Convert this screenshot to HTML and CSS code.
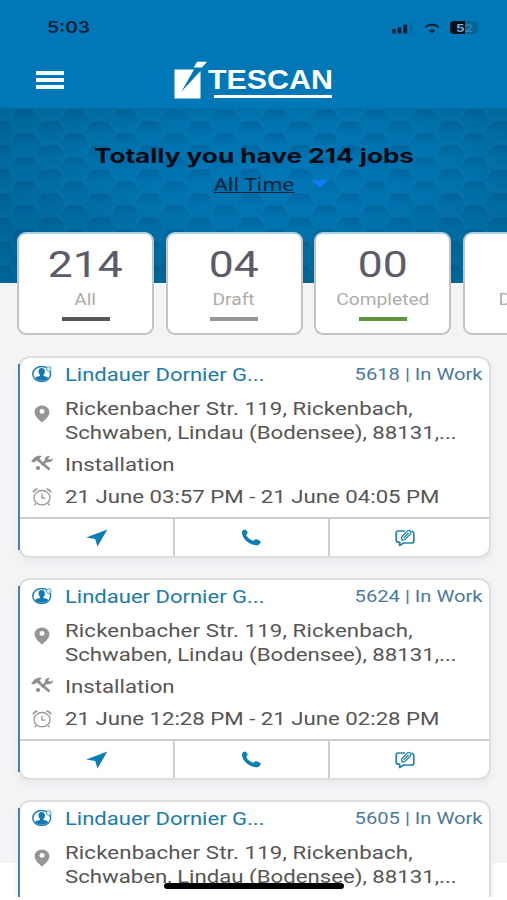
FILE: index.html
```html
<!DOCTYPE html>
<html lang="en">
  <head>
    <meta charset="UTF-8" />
    <meta name="viewport" content="width=device-width, initial-scale=1.0" />
    <title>Tescan jobs</title>
    <link rel="stylesheet" href="styles.css">
  </head>
  <body>
    <svg width="0" height="0" class="sprite">
      <symbol id="i-user" viewBox="0 0 20 18">
        <ellipse cx="9.700" cy="9" rx="8.900" ry="7.500" fill="#fff" stroke="#2580b5" stroke-width="1.500" />
        <ellipse cx="9.700" cy="6.600" rx="3.200" ry="3.500" fill="#1478b0" />
        <path d="M7.900 9h3.600v2c3 .5 4.400 1 4.700 2.200-3 3.300-10 3.300-13 0 .3-1.200 1.700-1.700 4.700-2.200z" fill="#1478b0" />
        <circle cx="16.800" cy="4" r="2.400" fill="#d5e8f2" stroke="#5b9fc6" stroke-width=".9" />
      </symbol>
      <symbol id="i-pin" viewBox="0 0 16 18">
        <path d="M8 .5C3.700.5.6 3.500.6 7.200.6 11.500 5 14.500 8 17.600c3-3.100 7.400-6.100 7.400-10.400C15.400 3.500 12.300.5 8 .5z" fill="#959595" />
        <ellipse cx="8" cy="6.400" rx="2.500" ry="2.400" fill="#fff" />
      </symbol>
      <symbol id="i-tools" viewBox="0 0 24 16">
        <path d="M1 6.500 4.500 2.500C7 .3 9.500.4 12 1L9.500 3.200 11 4.900 8.600 7 7 5.400 3.800 7.400z" fill="#8e8e8e" />
        <path d="M9 5.500 19.500 14.500" stroke="#8e8e8e" stroke-width="2.600" />
        <path d="M11.500 9.800 17.500 5" stroke="#8e8e8e" stroke-width="2.600" />
        <path d="M19.800 1c-4-.4-6 2.300-4.300 5.300 3 2.100 7.100.8 7.800-3l-3.300 1.500-2-1.300z" fill="#8e8e8e" />
        <circle cx="8" cy="13" r="2.100" fill="#8e8e8e" />
      </symbol>
      <symbol id="i-clock" viewBox="0 0 20 18">
        <g fill="none" stroke="#999" stroke-width="1.300">
          <ellipse cx="10" cy="9.700" rx="8" ry="7.200" />
          <path d="M10 5.500v4.700h3.500M4 15.500l-1.500 1.700M16 15.500l1.500 1.700" />
          <path d="M1 4.200C2 2.400 3.500 1.200 5.500.9M19 4.200C18 2.400 16.500 1.200 14.500.9" stroke-width="1.800" />
        </g>
      </symbol>
      <symbol id="i-nav" viewBox="0 0 24 20">
        <path d="M23.500.6 0 9.400 10 11 12.500 19.500z" fill="#0d7db3" />
      </symbol>
      <symbol id="i-phone" viewBox="0 0 22 18">
        <path d="M1 2.600C1.500 1.400 3 .5 4.300.5c1 .2 2.700 2.800 2.700 3.600 0 .9-1.700 1.600-1.500 2.500C6.600 9 9.500 11.300 12.500 12.400c1.100.2 2-1.500 3.200-1.500 1.100 0 4.800 1.600 5.100 2.500.1 1.300-1.600 3.500-3.300 3.900C9 17.600 0 10 1 2.600z" fill="#0d7db3" />
      </symbol>
      <symbol id="i-note" viewBox="0 0 20 18">
        <g fill="none" stroke="#2385ac" stroke-width="1.700" stroke-linejoin="round" stroke-linecap="round">
          <path d="M9.500 2H3.600Q1.200 2 1.200 4v7.200q0 2 2.400 2h1v3.300l4-2.500h8q2.200 0 2.200-2V5q0-2-1.500-2.700" />
          <path d="M7 10.700 6.500 8.300 12.500 1.900q1.600-1 2.900.2 1.200 1.200.2 2.600L9.700 10.600 7 11.200M9 8.600l4.200-4.300" stroke-width="1.300" />
        </g>
      </symbol>
    </svg>

    <header class="topbar">
      <div class="status">
        <span class="status-time"><span class="wide">5:03</span></span>
        <svg class="status-icons" width="90" height="16" viewBox="0 0 90 16">
          <g fill="#06213a">
            <rect x="1" y="9" width="3.800" height="4.500" rx="1" />
            <rect x="6.500" y="7.200" width="3.800" height="6.300" rx="1" />
            <rect x="12.200" y="4.500" width="4" height="9" rx="1" />
            <rect x="18" y="2" width="3.300" height="11.500" rx="1" opacity=".15" />
            <path d="M38 10.400 41 13.300l3-2.900q-3-1.900-6 0z" />
          </g>
          <path d="M34.300 7q6.700-4.800 13.400 0" fill="none" stroke="#06213a" stroke-width="2.200" />
          <rect x="59" y="1" width="28" height="13" rx="4" fill="#07649a" />
          <path d="M63 1h11v13H63q-4 0-4-4V5q0-4 4-4z" fill="#04101d" />
          <path d="M88.200 5.500q2 2 0 4z" fill="#07649a" />
          <text x="65" y="11.500" textLength="17" lengthAdjust="spacingAndGlyphs" class="battery-text">5<tspan fill="#2a85b5">2</tspan></text>
        </svg>
      </div>
      <div class="nav">
        <div class="menu"><i></i><i></i><i></i></div>
        <div class="logo">
          <svg width="34" height="38" viewBox="0 0 34 38">
            <path d="M.5 8.500H20L7.500 30.500 26.500 10V37.500H.5z" fill="#fff" />
            <path d="M23 .7H33L28 6.500H19.800z" fill="#fff" />
          </svg>
          <div class="logo-name"><span class="wide">TESCAN</span></div>
        </div>
      </div>
    </header>

    <section class="hero">
      <svg class="hero-bg" width="507" height="175">
        <defs>
          <linearGradient id="cell" x1="0" y1="0" x2="0" y2="1">
            <stop offset="0" stop-color="#004c7a" stop-opacity=".36" />
            <stop offset=".3" stop-color="#00558a" stop-opacity=".22" />
            <stop offset=".65" stop-color="#0075b0" stop-opacity=".05" />
            <stop offset="1" stop-color="#0083c4" stop-opacity=".1" />
          </linearGradient>
          <radialGradient id="glow" cx=".55" cy=".35" r=".62">
            <stop offset="0" stop-color="#0077b7" />
            <stop offset=".5" stop-color="#0073ae" />
            <stop offset="1" stop-color="#006596" />
          </radialGradient>
          <pattern id="comb" width="50" height="24" patternUnits="userSpaceOnUse">
            <g fill="url(#cell)" stroke="#1580b3" stroke-opacity=".16" stroke-width="1.400" stroke-linejoin="round">
              <path d="M9.500 12 17.300 1.200H32.700L40.500 12 32.700 23H17.300z" />
              <path d="M-15.500 0-7.700-10.800H7.700L15.500 0 7.700 11H-7.700z" />
              <path d="M34.500 0 42.300-10.800H57.700L65.500 0 57.700 11H42.300z" />
              <path d="M-15.500 24-7.700 13.200H7.700L15.500 24 7.700 35H-7.700z" />
              <path d="M34.500 24 42.300 13.200H57.700L65.500 24 57.700 35H42.300z" />
            </g>
          </pattern>
        </defs>
        <rect width="507" height="175" fill="url(#glow)" />
        <rect width="507" height="175" fill="url(#comb)" />
      </svg>
      <h1><span class="wide">Totally you have 214 jobs</span></h1>
      <div class="range"><span class="wide">All Time</span><b class="caret"></b></div>
    </section>

    <section class="stats">
      <div class="stat"><strong>214</strong><span>All</span><i class="bar dark"></i></div>
      <div class="stat"><strong>04</strong><span>Draft</span><i class="bar grey"></i></div>
      <div class="stat"><strong>00</strong><span>Completed</span><i class="bar green"></i></div>
      <div class="stat"><strong>00</strong><span>Deleted</span><i class="bar grey"></i></div>
    </section>

    <main class="jobs" id="jobs"></main>
    <div class="home-indicator"></div>

    <script>
      const jobs = [
        { id: 5618, time: '21 June 03:57 PM - 21 June 04:05 PM' },
        { id: 5624, time: '21 June 12:28 PM - 21 June 02:28 PM' },
        { id: 5605, time: '21 June 12:28 PM - 21 June 02:28 PM' },
      ];

      const icon = (name, w, h) => `<svg class="icon" width="${w}" height="${h}"><use href="#i-${name}" /></svg>`;

      document.getElementById('jobs').innerHTML = jobs.map(job => `
        <article class="job">
          <div class="job-row job-head">
            <div class="cell">${icon('user', 20, 18)}</div>
            <span class="wide name">Lindauer Dornier G...</span>
            <span class="wide state">${job.id} | In Work</span>
          </div>
          <div class="job-row job-address">
            <div class="cell">${icon('pin', 16, 18)}</div>
            <span class="wide text"><span class="street">Rickenbacher Str. 119, Rickenbach,</span><br>Schwaben, Lindau (Bodensee), 88131,...</span>
          </div>
          <div class="job-row job-type">
            <div class="cell">${icon('tools', 24, 16)}</div>
            <span class="wide text">Installation</span>
          </div>
          <div class="job-row job-time">
            <div class="cell">${icon('clock', 20, 18)}</div>
            <span class="wide text">${job.time}</span>
          </div>
          <div class="job-actions">
            <div>${icon('nav', 22, 18)}</div>
            <div>${icon('phone', 21, 17)}</div>
            <div>${icon('note', 20, 18)}</div>
          </div>
        </article>`).join('');
    </script>
  </body>
</html>
```
FILE: styles.css
```css
* {
  box-sizing: border-box;
}

html {
  overflow: hidden;
}

body {
  margin: 0;
  width: 507px;
  height: 900px;
  overflow: hidden;
  position: relative;
  background: linear-gradient(#f3f4f6 863px, #fff 863px);
  font-family: Roboto, "Liberation Sans", sans-serif;
}

.sprite {
  position: absolute;
}

/* horizontally extended lettering */
.wide {
  display: inline-block;
  white-space: nowrap;
  transform: scaleX(1.2);
  transform-origin: left center;
}

.topbar {
  height: 108px;
  background: #0078b7;
}

.status {
  display: flex;
  justify-content: space-between;
  padding: 19px 26px 0 47px;
  height: 54px;
}

.status-time {
  font: 600 16px/17px Inter, sans-serif;
  color: #06213d;
}

.status-icons {
  margin-top: 1px;
}

.battery-text {
  font: 700 11px Inter, sans-serif;
  fill: #75b3d4;
}

.nav {
  display: flex;
  padding-left: 36px;
}

.menu {
  display: flex;
  flex-direction: column;
  gap: 3px;
  width: 28px;
  margin: 17px 110px 0 0;
}

.menu i {
  height: 4px;
  background: #f3fbff;
}

.logo {
  display: flex;
  padding-top: 7px;
}

.logo-name {
  width: 118px;
  height: 31px;
  margin: 6px 0 0 6px;
  border-bottom: 3px solid #fff;
  color: #fff;
  font: 700 28px/25px "Liberation Sans", sans-serif;
}

.logo-name .wide {
  margin-left: -6px;
  transform: scaleX(1.085);
}

.hero {
  position: relative;
  height: 175px;
}

.hero-bg {
  position: absolute;
  inset: 0;
}

.hero h1 {
  position: relative;
  margin: 0;
  padding: 35px 0 0 94px;
  font: 700 20px/26px Inter, sans-serif;
  color: #020a14;
}

.hero h1 .wide {
  transform: scaleX(1.306);
}

.range {
  position: relative;
  display: flex;
  align-items: center;
  padding: 3px 0 0 214px;
  font: 18px/24px "Noto Sans", sans-serif;
  color: #06233c;
}

.range .wide {
  width: 67px;
  text-decoration: underline;
}

.caret {
  margin-left: 30px;
  border: 9px solid transparent;
  border-top: 8px solid #0c7cf4;
  border-bottom: 0;
}

.stats {
  position: relative;
  display: flex;
  gap: 11.5px;
  margin-top: -51px;
  padding-left: 17px;
  overflow: hidden;
}

.stat {
  display: flex;
  flex-direction: column;
  align-items: center;
  flex: 0 0 137px;
  height: 103px;
  padding-top: 10px;
  border: 2px solid #c1c3c5;
  border-top-color: #acd0e5;
  border-radius: 9px;
  background: #fff;
}

.stat strong {
  font-weight: 400;
  font-size: 37px;
  line-height: 41px;
  color: #5b5b6b;
  transform: scaleX(1.2);
}

.stat span {
  margin-top: 4px;
  font-size: 16px;
  line-height: 22px;
  color: #adadad;
  transform: scaleX(1.2);
}

.bar {
  width: 48px;
  height: 4px;
  margin-top: 6px;
}

.dark { background: #58585a; }
.grey { background: #969696; }
.green { background: #5f933c; }

.jobs {
  display: flex;
  flex-direction: column;
  gap: 20px;
  height: 541px;
  margin-top: 21px;
  padding-left: 18px;
  overflow: hidden;
}

.job {
  position: relative;
  flex: 0 0 202px;
  width: 473px;
  border: 2px solid #dcdee0;
  border-radius: 12px;
  background: #fff;
  box-shadow: 0 4px 6px #e8e9eb;
}

/* blue stripe on the card's left edge */
.job::before {
  content: "";
  position: absolute;
  left: -2px;
  top: 6px;
  bottom: 6px;
  width: 2px;
  background: #4f80ad;
}

.job-row {
  display: flex;
  padding-left: 9px;
}

.cell {
  display: flex;
  justify-content: center;
  width: 26px;
  margin-right: 10px;
}

.text,
.name {
  font-size: 18.5px;
  line-height: 24px;
  color: #555557;
}

.street {
  letter-spacing: 0.12px;
}

.job-head {
  height: 39px;
  padding-top: 5px;
}

.job-head .cell {
  padding-top: 2px;
}

.name {
  color: #1a7bad;
  transform: scaleX(1.19);
}

.state {
  margin: 0 6px 0 auto;
  font-size: 16px;
  line-height: 24px;
  color: #4a7aa0;
  transform: scaleX(1.26);
  transform-origin: right center;
}

.job-address {
  height: 56px;
}

.job-address .cell {
  padding-top: 8px;
}

.job-type {
  height: 32px;
}

.job-type .cell {
  padding-top: 2px;
}

.job-time {
  height: 32px;
}

.job-time .cell {
  padding-top: 3px;
}

.job-actions {
  display: grid;
  grid-template-columns: 155px 155px 1fr;
  height: 39px;
  border-top: 2px solid #cbcdcf;
}

.job-actions div {
  display: flex;
  align-items: center;
  justify-content: center;
  border-right: 2px solid #cbcdcf;
}

.job-actions div:last-child {
  border-right: 0;
  padding-right: 9px;
}

.home-indicator {
  position: absolute;
  left: 164px;
  top: 883px;
  width: 180px;
  height: 6px;
  border-radius: 3px;
  background: #000;
}
```
